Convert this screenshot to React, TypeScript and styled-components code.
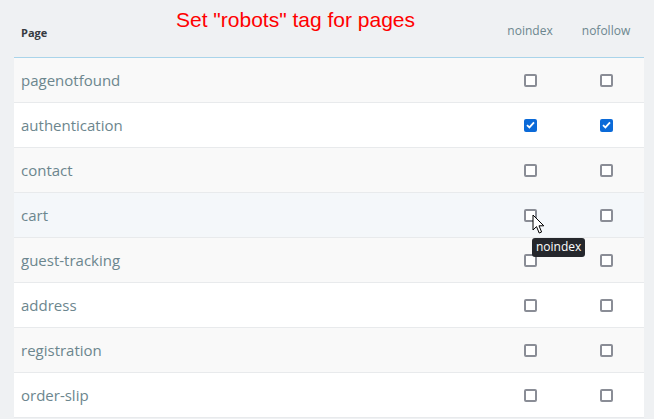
import React from "react";
import styled, { createGlobalStyle } from "styled-components";

const GlobalStyle = createGlobalStyle`
    html, body {
        margin: 0;
        padding: 0;
        background: #eff1f3;
        font-family: "Open Sans", "Noto Sans", sans-serif;
    }
`;

const Page = styled.div`
    position: relative;
    width: 654px;
    height: 419px;
    overflow: hidden;
    padding: 0 10px 0 14px;
    box-sizing: border-box;
`;

const Title = styled.div`
    position: absolute;
    left: 176px;
    top: 8px;
    font-family: "Liberation Sans", Arial, sans-serif;
    font-size: 21px;
    color: #ff0000;
`;

const Grid = styled.div`
    display: grid;
    grid-template-columns: 1fr 76px 76px;
`;

const HeadRow = styled(Grid)`
    height: 58px;
    align-items: end;
    border-bottom: 1px solid #a9d4ea;
    box-sizing: border-box;
`;

const HeadCell = styled.div<{ $bold?: boolean; $center?: boolean }>`
    padding-bottom: ${(p) => (p.$bold ? "17px" : "18px")};
    padding-left: ${(p) => (p.$center ? "0" : "7px")};
    text-align: ${(p) => (p.$center ? "center" : "left")};
    font-size: ${(p) => (p.$bold ? "11px" : "12px")};
    font-weight: ${(p) => (p.$bold ? 700 : 400)};
    color: ${(p) => (p.$bold ? "#363a41" : "#6c868e")};
`;

const Row = styled(Grid)<{ $tone: "odd" | "even" | "hover" }>`
    height: 45px;
    align-items: center;
    border-bottom: 1px solid #e8eaec;
    box-sizing: border-box;
    background: ${(p) =>
        p.$tone === "odd" ? "#f9f9f9" : p.$tone === "hover" ? "#f4f7fa" : "#ffffff"};
`;

const Name = styled.div`
    padding-left: 7px;
    font-size: 15px;
    color: #6c868e;
`;

const BoxCell = styled.div`
    position: relative;
    display: flex;
    justify-content: center;
`;

const Box = styled.span<{ $checked?: boolean }>`
    width: 13px;
    height: 13px;
    box-sizing: border-box;
    border-radius: 2px;
    border: ${(p) => (p.$checked ? "none" : "2px solid #8a8d96")};
    background: ${(p) => (p.$checked ? "#0b6ad8" : "#ffffff")};
    display: flex;
    align-items: center;
    justify-content: center;
`;

const Tip = styled.div`
    position: absolute;
    left: 40px;
    top: 29px;
    padding: 1px 4px 2px;
    border-radius: 3px;
    background: #25272c;
    color: #ffffff;
    font-size: 12px;
    line-height: 16px;
    white-space: nowrap;
    z-index: 2;
`;

const Cursor = styled.svg`
    position: absolute;
    left: 40px;
    top: 5px;
    z-index: 3;
`;

const pages = [
    { name: "pagenotfound" },
    { name: "authentication", index: true, follow: true },
    { name: "contact" },
    { name: "cart", hover: true },
    { name: "guest-tracking" },
    { name: "address" },
    { name: "registration" },
    { name: "order-slip" },
];

function Check({ checked }: { checked?: boolean }) {
    return (
        <Box $checked={checked}>
            {checked && (
                <svg width="9" height="8" viewBox="0 0 9 8">
                    <path d="M1 4.2 L3.4 6.4 L8 1.4" fill="none" stroke="#fff" strokeWidth="1.8" />
                </svg>
            )}
        </Box>
    );
}

export default function App() {
    return (
        <Page>
            <GlobalStyle />
            <Title>Set "robots" tag for pages</Title>
            <HeadRow>
                <HeadCell $bold>Page</HeadCell>
                <HeadCell $center>noindex</HeadCell>
                <HeadCell $center>nofollow</HeadCell>
            </HeadRow>
            {pages.map((p, i) => (
                <Row key={p.name} $tone={p.hover ? "hover" : i % 2 === 0 ? "odd" : "even"}>
                    <Name>{p.name}</Name>
                    <BoxCell>
                        <Check checked={p.index} />
                        {p.hover && (
                            <>
                                <Cursor width="13" height="21" viewBox="0 0 13 21">
                                    <path
                                        d="M1 1 L1 16 L4.5 12.6 L7.2 19 L9.6 18 L7 11.8 L11.8 11.8 Z"
                                        fill="#ffffff"
                                        stroke="#000000"
                                        strokeWidth="1"
                                        strokeLinejoin="round"
                                    />
                                </Cursor>
                                <Tip>noindex</Tip>
                            </>
                        )}
                    </BoxCell>
                    <BoxCell>
                        <Check checked={p.follow} />
                    </BoxCell>
                </Row>
            ))}
        </Page>
    );
}
